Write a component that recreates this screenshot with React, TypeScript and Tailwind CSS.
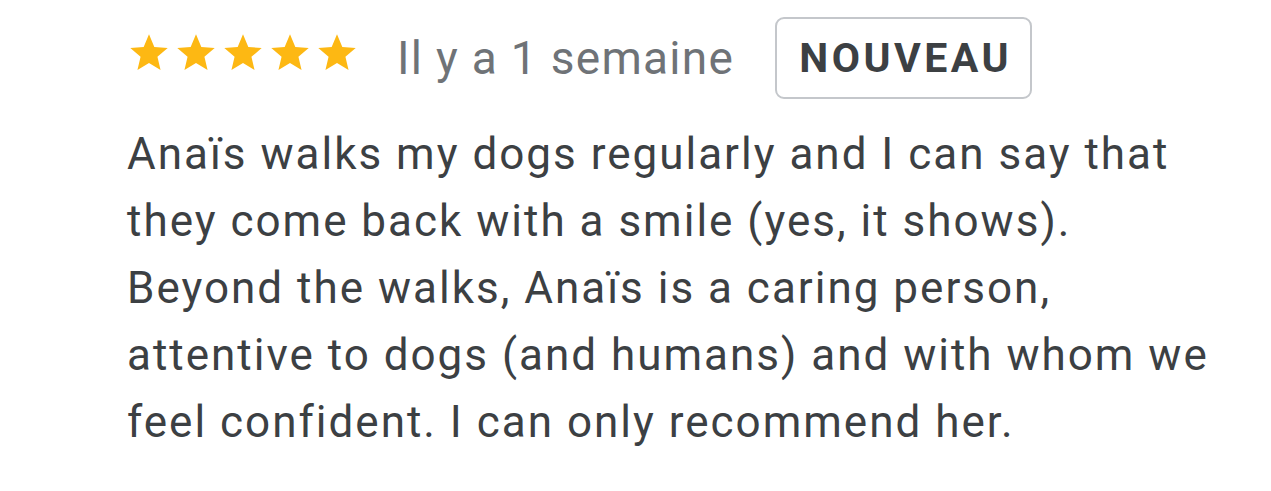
import React from "react";

const Star = () => (
  <svg viewBox="0 0 24 24" className="h-[44px] w-[44px] -mt-[10px]" fill="#FDB813">
    <path d="M12 1.8l2.9 6.9 7.3.6-5.6 4.8 1.7 7.2L12 17.5l-6.3 3.8 1.7-7.2-5.6-4.8 7.3-.6z" />
  </svg>
);

export default function App() {
  return (
    <div className="min-h-[491px] w-[1271px] bg-white pl-[127px] pt-[17px] font-['Roboto',sans-serif]">
      <div className="flex items-center">
        <div className="flex gap-[3px]">
          {[0, 1, 2, 3, 4].map((i) => (
            <Star key={i} />
          ))}
        </div>
        <span className="ml-[38px] text-[46px] leading-none tracking-[1.3px] text-[#6f7377]">Il y a 1 semaine</span>
        <span className="ml-[41px] flex h-[82px] items-center rounded-[9px] border-2 border-[#c4c7cb] pl-[22px] pr-[18px] text-[41px] font-bold leading-none tracking-[3.5px] text-[#3c4043]">
          NOUVEAU
        </span>
      </div>
      <p className="mt-[22px] w-[1130px] text-[44px] leading-[67px] tracking-[2px] text-[#3c4043]">
        Anaïs walks my dogs regularly and I can say that
        <br />
        they come back with a smile (yes, it shows).
        <br />
        Beyond the walks, Anaïs is a caring person,
        <br />
        attentive to dogs (and humans) and with whom we
        <br />
        feel confident. I can only recommend her.
      </p>
    </div>
  );
}
